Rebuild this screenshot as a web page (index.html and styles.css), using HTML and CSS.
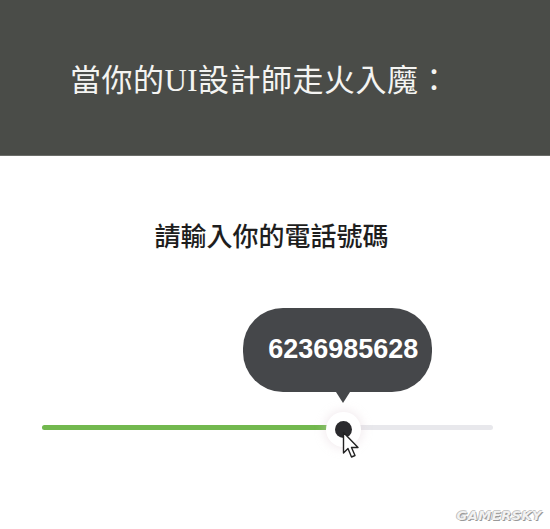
FILE: index.html
```html
<!DOCTYPE html>
<html lang="zh-Hant">
<head>
  <meta charset="UTF-8" />
  <meta name="viewport" content="width=device-width, initial-scale=1.0" />
  <title>當你的UI設計師走火入魔</title>
  <link rel="stylesheet" href="styles.css">
</head>
<body>
  <header class="bandeau">
    <h1>當你的UI設計師走火入魔：</h1>
  </header>

  <main class="contenu">
    <p class="consigne">請輸入你的電話號碼</p>

    <div class="curseur">
      <div class="piste">
        <div class="rempli" style="width: 66.7%"></div>
        <div class="poignee" style="left: 66.7%">
          <div class="bulle">6236985628</div>
          <svg class="fleche" width="20" height="30" viewBox="0 0 20 30">
            <path d="M1.5 1.5 L1.5 22 L6 17.5 L9.5 26 L13 24.5 L9.5 16.5 L16 16.5 Z" fill="#fff" stroke="#222" stroke-width="1.4" stroke-linejoin="round"/>
          </svg>
        </div>
      </div>
    </div>
  </main>

  <div class="filigrane">GAMERSKY</div>
</body>
</html>
```

FILE: styles.css
```css
body {
  margin: 0;
  width: 550px;
  height: 529px;
  overflow: hidden;
  background: #fff;
  position: relative;
  font-family: "Liberation Serif", "Noto Sans CJK TC", serif;
}

.bandeau {
  height: 155px;
  background: #4a4c48;
  display: flex;
  align-items: center;
  justify-content: center;
  border-bottom: 1px solid #6b6d69;
}

.bandeau h1 {
  margin: 0 30px 0 0;
  font-size: 31px;
  font-weight: normal;
  color: #f4f4f2;
  letter-spacing: 0.5px;
}

.contenu {
  display: flex;
  flex-direction: column;
  align-items: center;
}

.consigne {
  margin: 64px 7px 0 0;
  font-size: 26px;
  line-height: 36px;
  font-weight: 500;
  color: #1e1e1e;
}

.curseur {
  align-self: stretch;
  margin: 169px 57px 0 42px;
}

.piste {
  position: relative;
  height: 5px;
  border-radius: 3px;
  background: #e8e8ec;
}

.rempli {
  height: 100%;
  border-radius: 3px;
  background: #72b84e;
}

.poignee {
  position: absolute;
  top: 50%;
  width: 17px;
  height: 17px;
  margin: -7px 0 0 -8px;
  border-radius: 50%;
  background: #2a2a2d;
  box-shadow: 0 0 0 9px #fff, 0 0 10px 11px rgba(220, 200, 210, 0.35);
}

.bulle {
  position: absolute;
  left: -92px;
  top: -113px;
  width: 189px;
  height: 84px;
  border-radius: 40px;
  background: #45474a;
  color: #fff;
  font-family: "Liberation Sans", Arial, sans-serif;
  font-weight: bold;
  font-size: 27px;
  display: flex;
  align-items: center;
  justify-content: center;
  padding-left: 12px;
  box-sizing: border-box;
}

.bulle::after {
  content: "";
  position: absolute;
  left: 93px;
  bottom: -11px;
  border-left: 7px solid transparent;
  border-right: 7px solid transparent;
  border-top: 11px solid #45474a;
}

.fleche {
  position: absolute;
  left: 7px;
  top: 10px;
}

.filigrane {
  position: absolute;
  right: 8px;
  bottom: 6px;
  font-family: "DejaVu Sans", sans-serif;
  font-size: 13px;
  font-weight: bold;
  font-style: italic;
  letter-spacing: 0.5px;
  color: #f2f2f2;
  text-shadow: 1px 1px 0 #9a9a9a, -1px 0 0 #bdbdbd, 0 -1px 0 #c8c8c8;
}
```
